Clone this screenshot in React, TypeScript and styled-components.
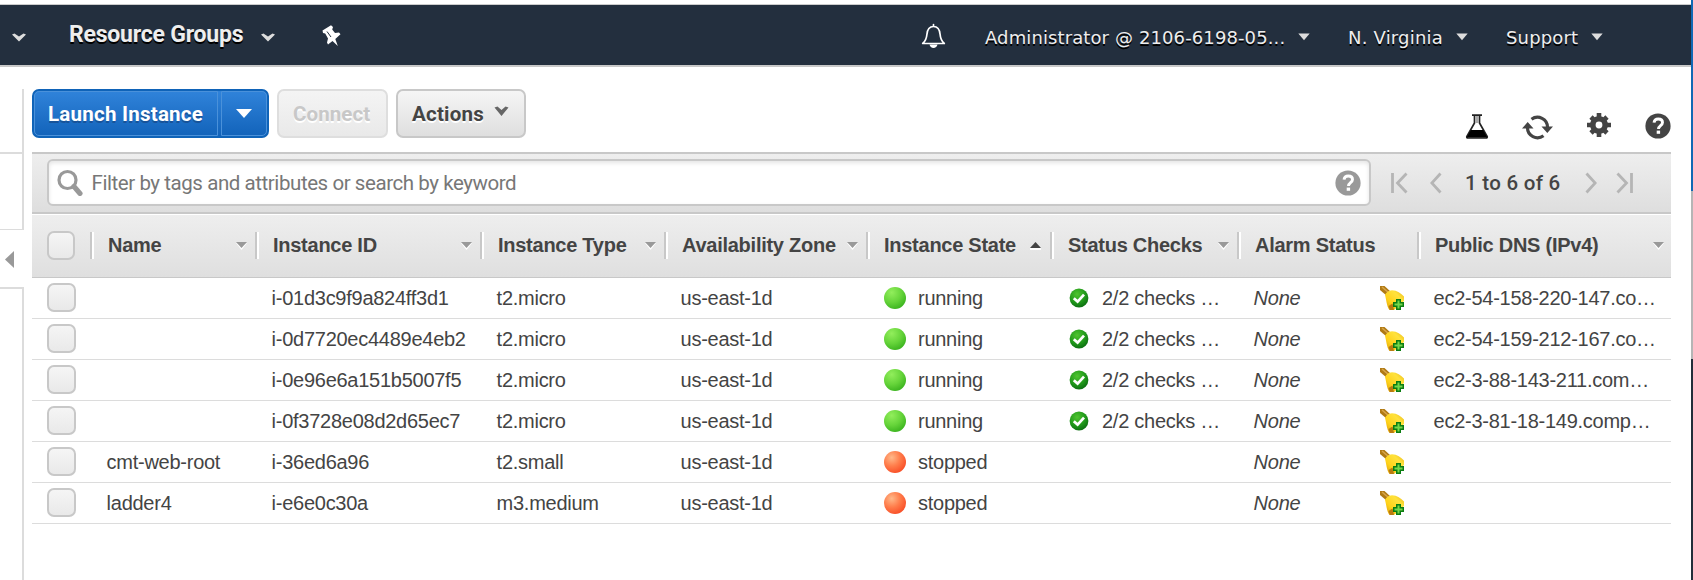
import React from "react";
import styled, { createGlobalStyle, css } from "styled-components";

const Global = createGlobalStyle`
  * { box-sizing: border-box; }
  body { margin: 0; background: #fff; overflow: hidden; }
`;

const sans = `"Liberation Sans", Arial, sans-serif`;
const roboto = `Roboto, "Liberation Sans", sans-serif`;

const Window = styled.div`
  display: flex;
  width: 1693px;
  height: 580px;
  overflow: hidden;
  background: #fff;
`;
const Page = styled.div`
  width: 1691px;
  display: flex;
  flex-direction: column;
`;
const DesktopEdge = styled.div`
  width: 2px;
  background: linear-gradient(#1169b4 0 191px, #b5b5b5 191px 359px, #232e3a 359px);
`;

/* ---- navigation bar ---- */
const NavBar = styled.header`
  display: flex;
  align-items: flex-start;
  height: 63px;
  margin-top: 4px;
  border-top: 1px solid #ccc;
  border-bottom: 2px solid #c8c8c8;
  background: #232f3e;
  color: #eee;
`;
const NavIcon = styled.svg<{ $left: number; $top: number }>`
  display: block;
  flex: none;
  margin: ${(p) => p.$top}px 0 0 ${(p) => p.$left}px;
`;
const NavGroups = styled.span`
  width: 174px;
  margin: 15px 0 0 43px;
  font: bold 23px/30px ${roboto};
  letter-spacing: -0.22px;
  white-space: nowrap;
  text-shadow: 0 2px 0 #000;
`;
const NavItem = styled.span<{ $left: number; $width: number; $spacing?: number }>`
  flex: none;
  width: ${(p) => p.$width}px;
  margin: 21px 0 0 ${(p) => p.$left}px;
  font: 18px/24px "DejaVu Sans", Verdana, sans-serif;
  letter-spacing: ${(p) => p.$spacing ?? 0}px;
  white-space: nowrap;
  text-shadow: 0 2px 0 #000;
`;

/* ---- frame ---- */
const Body = styled.div`
  flex: 1;
  display: flex;
  padding-top: 22px;
`;
const Sidebar = styled.aside`
  width: 24px;
  margin-right: 8px;
  display: flex;
  flex-direction: column;
`;
const SideBlock = styled.div<{ $height?: number; $line?: boolean }>`
  ${(p) => (p.$height ? css`height: ${p.$height}px;` : css`flex: 1;`)}
  border-right: 2px solid #dcdcdc;
  ${(p) => p.$line && css`border-bottom: 2px solid #dcdcdc;`}
`;
const CollapseTab = styled.div`
  height: 60px;
  padding: 21px 0 0 5px;
  border-top: 1px solid #dcdcdc;
  border-bottom: 2px solid #dcdcdc;
`;
const Main = styled.main`
  width: 1639px;
`;

/* ---- toolbar ---- */
const Toolbar = styled.div`
  display: flex;
  height: 63px;
`;
const Button = styled.button<{ $width: number; $tone: "primary" | "plain" | "disabled" }>`
  display: flex;
  align-items: center;
  width: ${(p) => p.$width}px;
  height: 49px;
  margin: 0 8px 0 0;
  padding: 0 0 0 14px;
  border: 2px solid #c8c8c8;
  border-radius: 7px;
  background: linear-gradient(#f5f5f5, #dfdfdf);
  color: #444;
  font: bold 20.5px/30px ${roboto};
  letter-spacing: 0.24px;
  white-space: nowrap;
  text-shadow: 0 2px 0 #fff;
  ${(p) =>
    p.$tone === "primary" &&
    css`
      padding: 0;
      border-color: #0f63b8;
      background: linear-gradient(#3083da, #1263ba);
      color: #fff;
      text-shadow: 0 2px 0 #17539a;
    `}
  ${(p) =>
    p.$tone === "disabled" &&
    css`
      border-color: #dedede;
      background: linear-gradient(#f4f4f4, #e9e9e9);
      color: #c8c8c8;
      letter-spacing: 0.1px;
    `}
`;
const ButtonPart = styled.span<{ $width: number; $divider?: boolean }>`
  display: flex;
  align-items: center;
  width: ${(p) => p.$width}px;
  height: 45px;
  padding-left: 13px;
  border: 1px solid #4a91da;
  border-radius: 5px 0 0 5px;
  ${(p) =>
    p.$divider &&
    css`
      margin-left: 3px;
      padding-left: 14px;
      border-radius: 0 5px 5px 0;
    `}
`;
const ButtonChevron = styled.svg`
  display: block;
  margin: -5px 0 0 10px;
`;
const ToolIcons = styled.div`
  display: flex;
  align-items: flex-start;
  margin-left: auto;
`;
const ToolIcon = styled.svg<{ $top: number; $right?: number }>`
  display: block;
  margin: ${(p) => p.$top}px ${(p) => p.$right ?? 0}px 0 0;
`;

/* ---- filter bar ---- */
const FilterBar = styled.div`
  display: flex;
  height: 62px;
  padding: 5px 0 0 15px;
  border-top: 2px solid #c8c8c8;
  border-bottom: 2px solid #c8c8c8;
  background: linear-gradient(#eee, #dedede);
`;
const SearchBox = styled.div`
  display: flex;
  align-items: center;
  width: 1324px;
  height: 47px;
  padding: 0 8px 0 8px;
  border: 2px solid #c8c8c8;
  border-radius: 6px;
  background: #fff;
  box-shadow: inset 0 2px 4px #e4e4e4;
`;
const Placeholder = styled.span`
  flex: 1;
  margin-left: 8.5px;
  font: 20.5px/30px ${roboto};
  color: #777;
  letter-spacing: -0.43px;
`;
const Pager = styled.div`
  display: flex;
  align-items: center;
  height: 47px;
  padding-left: 20px;
`;
const PagerCount = styled.span`
  width: 97px;
  margin: 0 23px 0 23px;
  font: 500 20.5px/30px ${roboto};
  letter-spacing: 0.28px;
  color: #444;
  white-space: nowrap;
`;
const PagerIcon = styled.svg<{ $right?: number }>`
  display: block;
  margin-right: ${(p) => p.$right ?? 0}px;
`;

/* ---- table ---- */
const columns = "58px 165px 225px 184px 202px 184px 187px 180px 254px";
const HeaderRow = styled.div`
  display: grid;
  grid-template-columns: ${columns};
  height: 64px;
  border-top: 1px solid #fff;
  border-bottom: 1px solid #c8c8c8;
  background: linear-gradient(#eee, #dfdfdf);
`;
const HeaderCell = styled.div<{ $right?: number }>`
  display: flex;
  align-items: center;
  justify-content: space-between;
  height: 27px;
  margin-top: 17px;
  padding: 0 ${(p) => p.$right ?? 8}px 0 16px;
  border-left: 2px solid #c8c8c8;
  box-shadow: inset 2px 0 0 #fff;
  font: bold 20px/26px ${sans};
  letter-spacing: -0.26px;
  color: #444;
  white-space: nowrap;
`;
const HeaderLabel = styled.span`
  margin-top: -2px;
`;
const Row = styled.div`
  display: grid;
  grid-template-columns: ${columns};
  height: 41px;
  border-bottom: 1px solid #dcdcdc;
`;
const Cell = styled.div<{ $italic?: boolean; $gap?: number }>`
  display: flex;
  align-items: center;
  gap: ${(p) => p.$gap ?? 0}px;
  padding-left: 16.6px;
  padding-bottom: 1px;
  overflow: hidden;
  font: ${(p) => (p.$italic ? "italic" : "normal")} 20px/28px ${sans};
  letter-spacing: -0.26px;
  color: #444;
  white-space: nowrap;
`;
const AlarmCell = styled(Cell)`
  justify-content: space-between;
  padding-right: 13px;
`;
const Check = styled.span<{ $header?: boolean }>`
  display: block;
  width: ${(p) => (p.$header ? 28 : 29)}px;
  height: 29px;
  margin: ${(p) => (p.$header ? 16 : 5)}px 0 0 15px;
  border: 2px solid #c8c8c8;
  border-radius: 7px;
  background: linear-gradient(#f5f5f5, #e9e9e9);
`;
const Orb = styled.span<{ $stopped?: boolean }>`
  width: 22px;
  height: 22px;
  flex: none;
  margin-left: 1.4px;
  border-radius: 50%;
  background: ${(p) =>
    p.$stopped
      ? "radial-gradient(circle at 35% 30%, #ffb98a 0, #ff7e4c 40%, #f9522a 75%, #d93a18 100%)"
      : "radial-gradient(circle at 35% 25%, #92ee5c 0, #66d43a 45%, #3db520 78%, #1f9410 100%)"};
`;
const StatusMark = styled.span`
  display: flex;
  margin-left: 2.4px;
`;

const NavChevron = ({ left }: { left: number }) => (
  <NavIcon $left={left} $top={28} width="14" height="9" viewBox="0 0 14 9">
    <path d="M0 1.500 2.500.500 7 3.500 11.500.500 14 1.500 7 8.500z" fill="#ddd" />
  </NavIcon>
);
const NavCaret = ({ left }: { left: number }) => (
  <NavIcon $left={left} $top={28} width="12" height="8" viewBox="0 0 12 8">
    <path d="M.3.5h11.4L6 7.3z" fill="#ddd" />
  </NavIcon>
);
const HelpMark = ({ color }: { color: string }) => (
  <g>
    <circle cx="13" cy="13" r="12.6" fill={color} />
    <path d="M9 9.6C9.4 6.9 11 6 13.2 6c2.6 0 4.3 1.4 4.3 3.5 0 3.1-4 3.2-4 6.5" fill="none" stroke="#fff" strokeWidth="2.9" />
    <rect x="11.7" y="17.6" width="3.4" height="3.2" fill="#fff" />
  </g>
);
const SortArrow = ({ up }: { up?: boolean }) => (
  <svg width="11" height="9" viewBox="0 0 11 9">
    <path d={up ? "M0 7h11v2H0z" : "M0 2h11L5.5 9z"} fill="#fff" />
    <path d={up ? "M0 7h11L5.5 1z" : "M0 1h11L5.5 7z"} fill={up ? "#444" : "#999"} />
  </svg>
);
const PassedIcon = () => (
  <svg width="20" height="20" viewBox="0 0 20 20">
    <defs>
      <radialGradient id="passed" cx=".4" cy=".3" r=".75">
        <stop offset="0" stopColor="#4fc52f" />
        <stop offset=".6" stopColor="#1f971a" />
        <stop offset="1" stopColor="#0a6a10" />
      </radialGradient>
    </defs>
    <circle cx="10" cy="10" r="9.4" fill="url(#passed)" />
    <path d="M4.8 10.2 8.6 13.6 15 6.6" fill="none" stroke="#fff" strokeWidth="2.7" />
  </svg>
);
const AlarmIcon = () => (
  <svg width="24" height="24" viewBox="0 0 24 24">
    <defs>
      <linearGradient id="brass" x1="0" y1="1" x2="1" y2="0">
        <stop offset="0" stopColor="#d99a08" />
        <stop offset=".35" stopColor="#ffd21a" />
        <stop offset=".7" stopColor="#ffe23c" />
        <stop offset="1" stopColor="#e8b414" />
      </linearGradient>
    </defs>
    <path d="M0 0h4.5L11 6 7 10 0 4z" fill="#b07a14" />
    <path d="M2 1 9 7" stroke="#d8a548" strokeWidth="1.6" />
    <path d="M5 9C6 6.500 8.500 4.500 12 4.200 17 4.500 21 7 24 10.500V15L14 24H9.500C6.500 20 6.500 14 5 9z" fill="url(#brass)" />
    <path d="M8.500 20 12.500 17.500 14 24H9.800z" fill="#b87a10" />
    <path d="M16 13h5v3h3v5h-3v3h-5v-3h-3v-5h3z" fill="#0c7d12" />
    <path d="M17.500 14.600h2v3h3v2h-3v3h-2v-3h-3v-2h3z" fill="#74d84a" />
  </svg>
);

type Instance = { name?: string; id: string; type: string; running?: boolean; dns?: string };
const instances: Instance[] = [
  { id: "i-01d3c9f9a824ff3d1", type: "t2.micro", running: true, dns: "ec2-54-158-220-147.co…" },
  { id: "i-0d7720ec4489e4eb2", type: "t2.micro", running: true, dns: "ec2-54-159-212-167.co…" },
  { id: "i-0e96e6a151b5007f5", type: "t2.micro", running: true, dns: "ec2-3-88-143-211.com…" },
  { id: "i-0f3728e08d2d65ec7", type: "t2.micro", running: true, dns: "ec2-3-81-18-149.comp…" },
  { name: "cmt-web-root", id: "i-36ed6a96", type: "t2.small" },
  { name: "ladder4", id: "i-e6e0c30a", type: "m3.medium" },
];
const headers: { label: string; sort?: "up" | "none"; right?: number }[] = [
  { label: "Name" },
  { label: "Instance ID" },
  { label: "Instance Type" },
  { label: "Availability Zone" },
  { label: "Instance State", sort: "up", right: 9 },
  { label: "Status Checks" },
  { label: "Alarm Status", sort: "none" },
  { label: "Public DNS (IPv4)", right: 7 },
];

export default function App() {
  return (
    <>
      <Global />
      <Window>
        <Page>
          <NavBar>
            <NavChevron left={12} />
            <NavGroups>Resource Groups</NavGroups>
            <NavChevron left={18} />
            <NavIcon $left={47} $top={20} width="19" height="22" viewBox="0 0 19 22">
              <path d="M.5 5.500 9 .300l2 1.700-.800 2.500L13 8l4-.500 1.500 1.800-5.200 4.700L15.800 21 10.500 16 6 19.500 5 17.500l1-4L3.200 8.500 1 8z" fill="#fff" />
              <path d="M5 6.500 9 12" stroke="#232f3e" strokeWidth="1" />
            </NavIcon>
            <NavIcon $left={580} $top={18} width="25" height="26" viewBox="0 0 25 26">
              <path d="M12.500 1.500v2M1.700 20.500h21.600c-3-2.500-3.800-4.500-4.200-9C18.700 6.500 16.800 3.500 12.500 3.500S6.300 6.500 5.900 11.500c-.400 4.500-1.200 6.500-4.200 9z" fill="none" stroke="#fff" strokeWidth="1.700" strokeLinejoin="round" strokeLinecap="round" />
              <path d="M8.500 21.500h8c-.500 2.300-2 3.500-4 3.500s-3.500-1.200-4-3.500z" fill="#fff" />
            </NavIcon>
            <NavItem $left={39} $width={300} $spacing={0.11}>Administrator @ 2106-6198-05...</NavItem>
            <NavCaret left={13} />
            <NavItem $left={38} $width={97} $spacing={0.2}>N. Virginia</NavItem>
            <NavCaret left={11} />
            <NavItem $left={38} $width={75} $spacing={0.15}>Support</NavItem>
            <NavCaret left={10} />
          </NavBar>
          <Body>
            <Sidebar>
              <SideBlock $height={65} $line />
              <SideBlock $height={75} />
              <CollapseTab>
                <svg width="9" height="17" viewBox="0 0 9 17" display="block">
                  <path d="M9 0v17L0 8.500z" fill="#999" />
                </svg>
              </CollapseTab>
              <SideBlock />
            </Sidebar>
            <Main>
              <Toolbar>
                <Button $width={237} $tone="primary">
                  <ButtonPart $width={184}>Launch Instance</ButtonPart>
                  <ButtonPart $width={46} $divider>
                    <svg width="16" height="9" viewBox="0 0 16 9">
                      <path d="M0 0h16L8 9z" fill="#fff" />
                    </svg>
                  </ButtonPart>
                </Button>
                <Button $width={111} $tone="disabled">Connect</Button>
                <Button $width={130} $tone="plain">
                  Actions
                  <ButtonChevron width="15" height="11" viewBox="0 0 15 11">
                    <path d="M.500 1.500 3.500.500 7.500 4 11.500.500 14.500 1.500 7.500 10z" fill="#666" />
                  </ButtonChevron>
                </Button>
                <ToolIcons>
                  <ToolIcon $top={25} $right={33} width="24" height="25" viewBox="0 0 24 25">
                    <path d="M7 1.200h10M9.500 1v8L1.800 22.500Q1.500 24 3 24H21Q22.500 24 22.200 22.500L14.500 9V1" fill="none" stroke="#222" strokeWidth="1.700" />
                    <path d="M10.500 2h3v7h-3z" fill="#aaa" />
                    <path d="M5.800 16h12.400l4.200 7.500H1.600z" fill="#000" />
                  </ToolIcon>
                  <ToolIcon $top={26} $right={34} width="31" height="25" viewBox="0 0 31 25">
                    <path d="M9.500 4.300A10 10 0 0 1 25.500 12.500M21.500 20.700A10 10 0 0 1 5.500 12.500" fill="none" stroke="#444" strokeWidth="3.200" />
                    <path d="M19.500 11.500H31L25.300 18zM0 13.500h11.500L5.700 7z" fill="#444" />
                  </ToolIcon>
                  <ToolIcon $top={24} $right={34} width="24" height="24" viewBox="0 0 24 24">
                    <circle cx="12" cy="12" r="6.200" fill="none" stroke="#444" strokeWidth="5.600" />
                    <path d="M12 0v5M12 19v5M0 12h5M19 12h5M4 4l3 3M17 17l3 3M20 4 17 7M7 17l-3 3" stroke="#444" strokeWidth="4.600" />
                  </ToolIcon>
                  <ToolIcon $top={24} width="26" height="26" viewBox="0 0 26 26">
                    <HelpMark color="#444" />
                  </ToolIcon>
                </ToolIcons>
              </Toolbar>
              <FilterBar>
                <SearchBox>
                  <svg width="26" height="27" viewBox="0 0 26 27">
                    <circle cx="10.500" cy="11" r="8.500" fill="none" stroke="#999" strokeWidth="3.200" />
                    <path d="m17 17.500 6 7" stroke="#999" strokeWidth="5" strokeLinecap="round" />
                  </svg>
                  <Placeholder>Filter by tags and attributes or search by keyword</Placeholder>
                  <svg width="26" height="26" viewBox="0 0 26 26">
                    <HelpMark color="#999" />
                  </svg>
                </SearchBox>
                <Pager>
                  <PagerIcon $right={22} width="17" height="22" viewBox="0 0 17 22">
                    <path d="M1.500 1v20M15.500 1.500 6.500 11l9 9.500" fill="none" stroke="#b5b5b5" strokeWidth="2.800" />
                  </PagerIcon>
                  <PagerIcon width="12" height="22" viewBox="0 0 12 22">
                    <path d="M10.500 1.500 1.800 11l8.700 9.500" fill="none" stroke="#b5b5b5" strokeWidth="2.800" />
                  </PagerIcon>
                  <PagerCount>1 to 6 of 6</PagerCount>
                  <PagerIcon $right={19} width="12" height="22" viewBox="0 0 12 22">
                    <path d="m1.500 1.500 8.700 9.500-8.700 9.500" fill="none" stroke="#b5b5b5" strokeWidth="2.800" />
                  </PagerIcon>
                  <PagerIcon width="17" height="22" viewBox="0 0 17 22">
                    <path d="M15.500 1v20M1.500 1.500l9 9.500-9 9.500" fill="none" stroke="#b5b5b5" strokeWidth="2.800" />
                  </PagerIcon>
                </Pager>
              </FilterBar>
              <HeaderRow>
                <Check $header />
                {headers.map((h) => (
                  <HeaderCell key={h.label} $right={h.right}>
                    <HeaderLabel>{h.label}</HeaderLabel>
                    {h.sort !== "none" && <SortArrow up={h.sort === "up"} />}
                  </HeaderCell>
                ))}
              </HeaderRow>
              {instances.map((it) => (
                <Row key={it.id}>
                  <Check />
                  <Cell>{it.name}</Cell>
                  <Cell>{it.id}</Cell>
                  <Cell>{it.type}</Cell>
                  <Cell>us-east-1d</Cell>
                  <Cell $gap={12}>
                    <Orb $stopped={!it.running} />
                    {it.running ? "running" : "stopped"}
                  </Cell>
                  <Cell $gap={13}>
                    {it.running && (
                      <>
                        <StatusMark>
                          <PassedIcon />
                        </StatusMark>
                        2/2 checks …
                      </>
                    )}
                  </Cell>
                  <AlarmCell $italic>
                    None
                    <AlarmIcon />
                  </AlarmCell>
                  <Cell>{it.dns}</Cell>
                </Row>
              ))}
            </Main>
          </Body>
        </Page>
        <DesktopEdge />
      </Window>
    </>
  );
}
